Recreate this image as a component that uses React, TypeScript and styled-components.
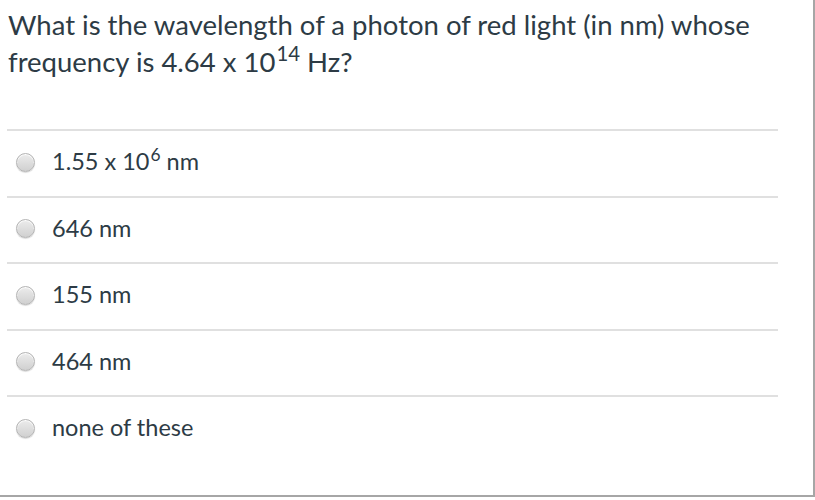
import React from "react";
import styled, { createGlobalStyle } from "styled-components";

const Global = createGlobalStyle`
  html, body { margin: 0; padding: 0; background: #fff; }
  body { font-family: Lato, "Open Sans", sans-serif; color: #2d3b45; }
`;

const Frame = styled.div`
  box-sizing: border-box;
  width: 815px;
  height: 497px;
  border-right: 2px solid #a6a6a6;
  border-bottom: 2px solid #a6a6a6;
  padding: 6px 0 0 7px;
`;

const Question = styled.div`
  font-size: 27.5px;
  line-height: 37px;
  padding-left: 1px;
  width: 770px;
  margin-bottom: 49px;
`;

const Sup = styled.sup`
  font-size: 0.74em;
  line-height: 0;
  vertical-align: 0.55em;
  margin-left: 1px;
`;

const List = styled.div`
  width: 771px;
`;

const Row = styled.label`
  display: flex;
  align-items: center;
  gap: 17px;
  height: 66.5px;
  box-sizing: border-box;
  border-top: 2px solid #e0e0e0;
  padding: 0 0 4px 9px;
  font-size: 23.5px;
`;

const Radio = styled.span`
  display: inline-block;
  flex: none;
  width: 19px;
  height: 19px;
  margin-top: 2px;
  border-radius: 50%;
  box-sizing: border-box;
  border: 1px solid #b4b4b4;
  background: linear-gradient(#ececec, #d0d0d0);
  box-shadow: inset 0 1px 1px #fff, 0 1px 1px rgba(0,0,0,0.15);
`;

const Label = styled.span`
  line-height: 26px;
`;

const options: React.ReactNode[] = [
  <>1.55 x 10<Sup>6</Sup> nm</>,
  "646 nm",
  "155 nm",
  "464 nm",
  "none of these",
];

export default function App() {
  return (
    <>
      <Global />
      <Frame>
        <Question>
          What is the wavelength of a photon of red light (in nm) whose frequency is 4.64 x 10<Sup>14</Sup> Hz?
        </Question>
        <List>
          {options.map((o, i) => (
            <Row key={i}>
              <Radio />
              <Label>{o}</Label>
            </Row>
          ))}
        </List>
      </Frame>
    </>
  );
}
